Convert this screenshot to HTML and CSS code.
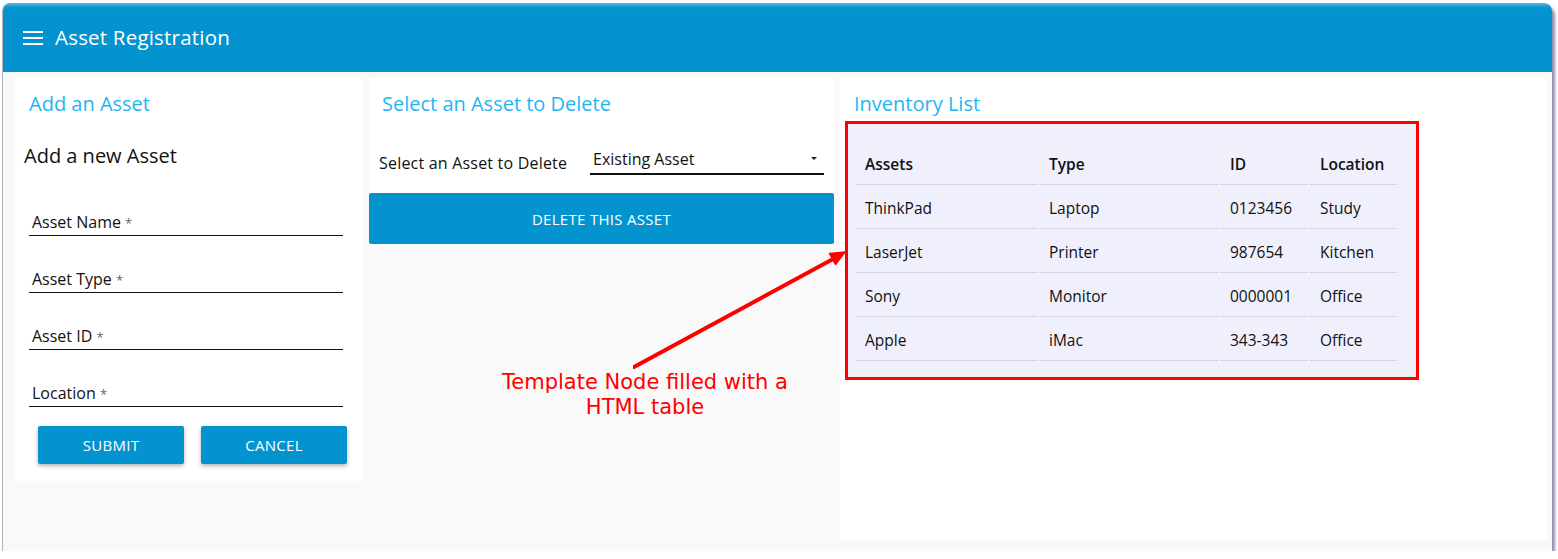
FILE: index.html
```html
<!DOCTYPE html>
<html>
<head>
<meta charset="utf-8">
<link rel="stylesheet" href="styles.css">
</head>
<body>
<div class="window">
  <header class="appbar">
    <svg class="menu-icon" width="20" height="14" viewBox="0 0 20 14"><rect x="0" y="0" width="20" height="2" fill="#fff"/><rect x="0" y="6" width="20" height="2" fill="#fff"/><rect x="0" y="12" width="20" height="2" fill="#fff"/></svg>
    <span class="app-title">Asset Registration</span>
  </header>
  <main class="content">
    <section class="card card-add">
      <h2 class="card-title">Add an Asset</h2>
      <h3 class="subtitle">Add a new Asset</h3>
      <div class="field"><span class="field-label">Asset Name <span class="req">*</span></span></div>
      <div class="field"><span class="field-label">Asset Type <span class="req">*</span></span></div>
      <div class="field"><span class="field-label">Asset ID <span class="req">*</span></span></div>
      <div class="field"><span class="field-label">Location <span class="req">*</span></span></div>
      <div class="btn-row">
        <button class="btn btn-raised">SUBMIT</button>
        <button class="btn btn-raised">CANCEL</button>
      </div>
    </section>
    <section class="card card-delete">
      <h2 class="card-title">Select an Asset to Delete</h2>
      <div class="select-row">
        <span class="select-label">Select an Asset to Delete</span>
        <div class="select-box"><span>Existing Asset</span><span class="caret"></span></div>
      </div>
      <button class="btn btn-wide">DELETE THIS ASSET</button>
    </section>
    <section class="card card-list">
      <h2 class="card-title">Inventory List</h2>
      <div class="template-node">
        <table class="inv-table">
          <thead>
            <tr><th class="c1">Assets</th><th class="c2">Type</th><th class="c3">ID</th><th class="c4">Location</th></tr>
          </thead>
          <tbody>
            <tr><td>ThinkPad</td><td>Laptop</td><td>0123456</td><td>Study</td></tr>
            <tr><td>LaserJet</td><td>Printer</td><td>987654</td><td>Kitchen</td></tr>
            <tr><td>Sony</td><td>Monitor</td><td>0000001</td><td>Office</td></tr>
            <tr><td>Apple</td><td>iMac</td><td>343-343</td><td>Office</td></tr>
          </tbody>
        </table>
      </div>
    </section>
    <div class="annotation">
      <svg class="arrow" width="230" height="130" viewBox="0 0 230 130">
        <line x1="1" y1="123" x2="201" y2="14.5" stroke="#ff0000" stroke-width="4" stroke-linecap="round"/>
        <polygon points="212,8 196.5,9.5 202.5,20.5" fill="#ff0000" stroke="#ff0000" stroke-width="1.5" stroke-linejoin="round"/>
      </svg>
      <p class="note">Template Node filled with a<br>HTML table</p>
    </div>
  </main>
</div>
</body>
</html>
```
FILE: styles.css
```css
* { box-sizing: border-box; }
html, body { margin: 0; padding: 0; background: #ffffff; }
body { font-family: "Open Sans", Lato, sans-serif; color: #111; }

.window {
  margin: 3px 6px 0 2px;
  height: 548px;
  border-left: 1px solid #b4b4c0;
  border-radius: 8px 8px 0 0;
  overflow: hidden;
  box-shadow: 3px 4px 3px rgba(90, 85, 130, 0.65);
  display: flex;
  flex-direction: column;
  background: #f9f9f9;
}

.appbar {
  height: 69px;
  background: linear-gradient(to bottom, #5ab8e2 0, #0a97d0 4px, #0394cf 7px);
  display: flex;
  align-items: center;
  padding-left: 20px;
  flex: none;
}
.menu-icon { margin-right: 12px; margin-top: 1px; }
.app-title { color: #fff; font-size: 20.5px; line-height: 28px; margin-top: -2px; font-weight: 400; letter-spacing: 0.2px; }

.content {
  position: relative;
  flex: 1;
  display: flex;
  align-items: flex-start;
  gap: 6px;
  padding: 6px 5px 0 12px;
  background: #f9f9f9;
}

.card { background: #fff; }
.card-title {
  margin: 0;
  font-weight: 400;
  font-size: 20px;
  color: #1fb6f2;
  line-height: 26px;
  padding-top: 13px;
}

.card-add { width: 348px; height: 403px; padding-left: 14px; }
.subtitle {
  margin: 26px 0 0 -5px;
  font-weight: 400;
  font-size: 20px;
  line-height: 26px;
  color: #111;
}
.field {
  width: 314px;
  height: 25px;
  border-bottom: 1px solid #111;
  padding-left: 3px;
  margin-top: 32px;
}
.field:first-of-type { margin-top: 42px; }
.field-label { font-size: 16px; line-height: 22px; color: #111; }
.req { color: #666; font-size: 13px; }

.btn-row { display: flex; gap: 17px; margin: 19px 0 0 9px; }
.btn {
  font-family: "Open Sans", Lato, sans-serif;
  border: none;
  background: #0394cf;
  color: #fff;
  font-size: 15px;
  letter-spacing: 0.3px;
  border-radius: 2px;
  cursor: pointer;
}
.btn-raised { width: 146px; height: 38px; box-shadow: 0 2px 4px rgba(0,0,0,0.3); }

.card-delete { width: 465px; }
.card-delete .card-title { padding-left: 13px; }
.select-row { display: flex; align-items: flex-end; margin-top: 30px; padding-left: 10px; }
.select-label { font-size: 16px; line-height: 22px; margin-bottom: 1px; width: 211px; flex: none; letter-spacing: 0.2px; }
.select-box {
  width: 234px;
  height: 28px;
  border-bottom: 2px solid #111;
  display: flex;
  justify-content: space-between;
  align-items: center;
  padding: 0 7px 3px 3px;
  font-size: 16px;
}
.caret {
  width: 0; height: 0;
  border-left: 3px solid transparent;
  border-right: 3px solid transparent;
  border-top: 3px solid #222;
}
.btn-wide { display: block; width: 465px; height: 51px; margin-top: 18px; }

.card-list { width: 707px; height: 462px; }
.card-list .card-title { padding-left: 14px; }
.template-node {
  margin: 4px 0 0 5px;
  width: 574px;
  height: 259px;
  border: 3px solid #ff0000;
  background: #f0f0fc;
  padding: 17px 5px 0 5px;
}
.inv-table { border-collapse: separate; border-spacing: 2px; font-size: 15.5px; }
.inv-table th, .inv-table td {
  text-align: left;
  height: 42px;
  padding: 0 0 0 10px;
  border-bottom: 1px solid #d4d4e0;
  color: #111;
}
.inv-table th { font-weight: 600; }
.c1 { width: 182px; }
.c2 { width: 179px; }
.c3 { width: 88px; }
.c4 { width: 87px; }

.annotation { position: absolute; left: 477px; top: 170px; width: 370px; height: 170px; pointer-events: none; }
.arrow { position: absolute; left: 153px; top: 2px; }
.note {
  position: absolute;
  left: 0; top: 128px;
  width: 330px;
  margin: 0;
  text-align: center;
  font-family: "DejaVu Sans", sans-serif;
  font-size: 21px;
  line-height: 25px;
  color: #ff0000;
}
```
